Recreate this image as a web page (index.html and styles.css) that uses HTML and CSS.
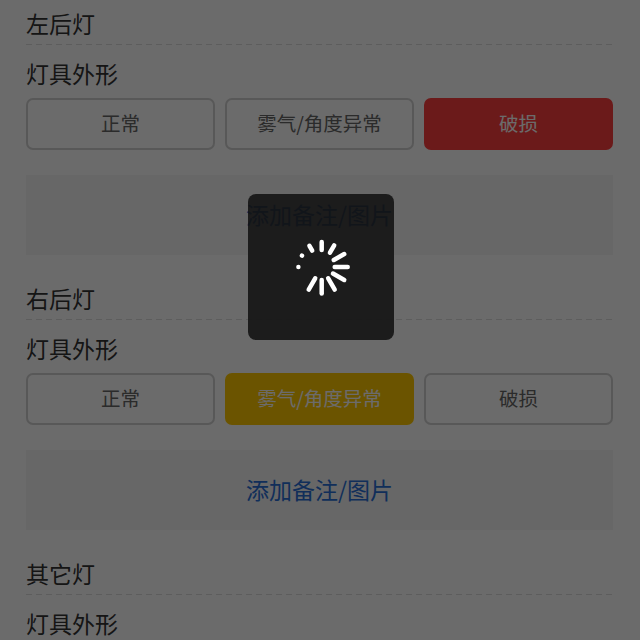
FILE: index.html
```html
<!DOCTYPE html>
<html lang="zh-CN">
  <head>
    <meta charset="UTF-8" />
    <meta name="viewport" content="width=device-width, initial-scale=1.0" />
    <title>灯具检查</title>
    <link rel="stylesheet" href="styles.css">
  </head>
  <body>
    <div class="page">
      <section class="lamp">
        <h2 class="lamp-title">左后灯</h2>
        <h3 class="lamp-label">灯具外形</h3>
        <div class="options">
          <div class="option">正常</div>
          <div class="option">雾气/角度异常</div>
          <div class="option option-red">破损</div>
        </div>
        <div class="remark">添加备注/图片</div>
      </section>
      <section class="lamp">
        <h2 class="lamp-title">右后灯</h2>
        <h3 class="lamp-label">灯具外形</h3>
        <div class="options">
          <div class="option">正常</div>
          <div class="option option-yellow">雾气/角度异常</div>
          <div class="option">破损</div>
        </div>
        <div class="remark">添加备注/图片</div>
      </section>
      <section class="lamp">
        <h2 class="lamp-title">其它灯</h2>
        <h3 class="lamp-label">灯具外形</h3>
      </section>
    </div>

    <div class="mask"></div>
    <div class="toast">
      <svg class="spinner" width="60" height="60" viewBox="-0.7 0 60 60">
        <line x1="30" y1="13" x2="30" y2="5" />
        <line x1="30" y1="13.5" x2="30" y2="5" transform="rotate(30 30 30)" />
        <line x1="30" y1="16" x2="30" y2="4" transform="rotate(60 30 30)" />
        <line x1="30" y1="17" x2="30" y2="4" transform="rotate(90 30 30)" />
        <line x1="30" y1="17" x2="30" y2="4" transform="rotate(120 30 30)" />
        <line x1="30" y1="17" x2="30" y2="4" transform="rotate(150 30 30)" />
        <line x1="30" y1="17" x2="30" y2="3.5" transform="rotate(180 30 30)" />
        <line x1="30" y1="17" x2="30" y2="4" transform="rotate(210 30 30)" />
        <line x1="30" y1="6.7" x2="30" y2="6.7" transform="rotate(270 30 30)" />
        <line x1="30" y1="7.2" x2="30" y2="7.2" transform="rotate(300 30 30)" />
        <line x1="30" y1="11" x2="30" y2="5.5" transform="rotate(330 30 30)" />
      </svg>
    </div>
  </body>
</html>
```
FILE: styles.css
```css
html,
body {
  margin: 0;
  height: 100%;
}
body {
  font-family: "Noto Sans CJK SC", "Noto Sans", sans-serif;
  background-color: #fff;
  color: #333;
  overflow: hidden;
}
.page {
  padding: 6px 27px 0 26px;
}
.lamp {
  padding-bottom: 26px;
}
.lamp:last-child {
  padding-bottom: 0;
}
.lamp-title {
  margin: 0;
  padding-bottom: 5px;
  font-size: 23px;
  font-weight: 400;
  line-height: 34px;
  background: linear-gradient(to right, #dedede 60%, transparent 60%) left bottom / 10px 1px repeat-x;
}
.lamp-label {
  margin: 0;
  padding: 9px 0 6px;
  font-size: 23px;
  font-weight: 400;
  line-height: 38px;
}
.lamp:last-child .lamp-label {
  padding: 11px 0 0;
  line-height: 34px;
}
.options {
  display: grid;
  grid-template-columns: repeat(3, 1fr);
  gap: 10px;
}
.option {
  height: 52px;
  box-sizing: border-box;
  padding-bottom: 3px;
  display: flex;
  align-items: center;
  justify-content: center;
  font-size: 19.5px;
  color: #666;
  border: 2px solid #d2d2d2;
  border-radius: 7px;
}
.option-red {
  background-color: #ff3e3e;
  border-color: #ff3e3e;
  color: #fff;
}
.option-yellow {
  background-color: #ffc800;
  border-color: #ffc800;
  color: #fff;
}
.remark {
  height: 80px;
  box-sizing: border-box;
  padding-bottom: 2px;
  margin-top: 25px;
  display: flex;
  align-items: center;
  justify-content: center;
  font-size: 23px;
  color: #2a6fd6;
  background-color: #f5f5f5;
}
.mask {
  position: fixed;
  inset: 0;
  background-color: rgba(0, 0, 0, 0.58);
}
.toast {
  position: fixed;
  left: 248px;
  top: 194px;
  width: 146px;
  height: 146px;
  display: flex;
  align-items: center;
  justify-content: center;
  border-radius: 8px;
  background-color: rgba(17, 17, 17, 0.88);
}
.spinner line {
  stroke: #fff;
  stroke-width: 4.5;
  stroke-linecap: round;
}
```
